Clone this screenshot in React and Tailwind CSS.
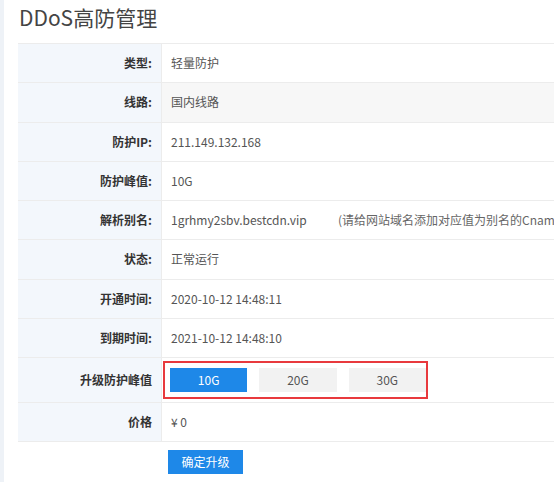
import React from "react";

const rows = [
  { label: "类型:", value: "轻量防护" },
  { label: "线路:", value: "国内线路", hover: true },
  { label: "防护IP:", value: "211.149.132.168" },
  { label: "防护峰值:", value: "10G" },
  { label: "解析别名:", value: "1grhmy2sbv.bestcdn.vip", note: "(请给网站域名添加对应值为别名的Cname记录)" },
  { label: "状态:", value: "正常运行" },
  { label: "开通时间:", value: "2020-10-12 14:48:11" },
  { label: "到期时间:", value: "2021-10-12 14:48:10" },
];

const font = { fontFamily: '"Microsoft YaHei", "Noto Sans CJK SC", "Noto Sans", sans-serif' };

function Row({ label, children, hover, tall }) {
  return (
    <div className={`flex border-b border-[#ececec] ${tall ? "h-[45px]" : "h-[39.25px]"}`}>
      <div className="w-[144px] shrink-0 bg-[#f3f7fc] border-r border-[#ececec] flex items-center justify-end pr-[9px] text-[12px] font-bold text-[#333]">
        {label}
      </div>
      <div className={`flex-1 flex items-center text-[12px] text-[#555] ${hover ? "bg-[#f7f7f7]" : "bg-white"}`}>
        {children}
      </div>
    </div>
  );
}

export default function App() {
  return (
    <div className="w-[554px] h-[482px] overflow-hidden bg-white flex" style={font}>
      <div className="w-[4px] shrink-0 bg-[#eef2f7]" />
      <div className="flex-1 min-w-0 pl-[14px]">
        <h1 className="text-[21px] leading-[22px] font-normal text-[#444] pt-[6px] pl-[1px] h-[43px]">DDoS高防管理</h1>
        <div className="w-[640px] border-t border-[#ececec]">
          {rows.map((r) => (
            <Row key={r.label} label={r.label} hover={r.hover}>
              <span className={`pl-[9px] ${r.note ? "w-[176px] shrink-0" : ""}`}>{r.value}</span>
              {r.note && <span className="whitespace-nowrap text-[#666]">{r.note}</span>}
            </Row>
          ))}
          <Row label="升级防护峰值" tall>
            <div className="ml-[1px] h-[38px] w-[265px] border-2 border-[#e8393d] flex items-center gap-[12px] pl-[5px]">
              <button className="w-[78px] h-[24px] bg-[#1e88e8] text-white text-[12px]">10G</button>
              <button className="w-[78px] h-[24px] bg-[#f2f2f2] text-[#555] text-[12px]">20G</button>
              <button className="w-[78px] h-[24px] bg-[#f2f2f2] text-[#555] text-[12px]">30G</button>
            </div>
          </Row>
          <Row label="价格">
            <span className="pl-[9px]">¥ 0</span>
          </Row>
        </div>
        <div className="pl-[150px] pt-[6px]">
          <button className="w-[75px] h-[24px] bg-[#1e88e8] text-white text-[12px]">确定升级</button>
        </div>
      </div>
    </div>
  );
}
